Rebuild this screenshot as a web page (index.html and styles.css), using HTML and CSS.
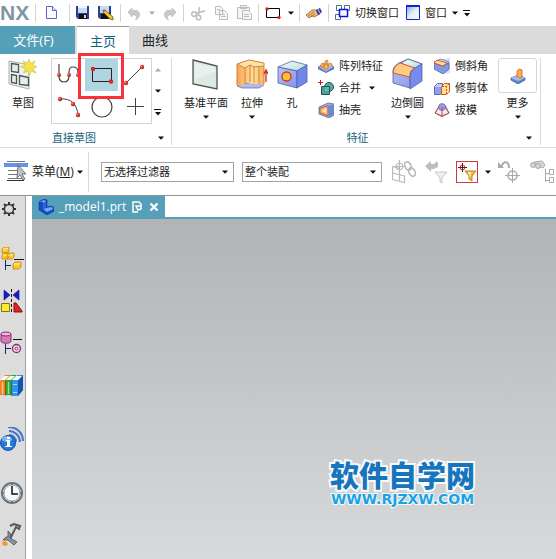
FILE: index.html
```html
<!DOCTYPE html>
<html lang="zh-CN">
<head>
<meta charset="utf-8">
<title>NX</title>
<link rel="stylesheet" href="styles.css">
</head>
<body>
<svg class="defs" aria-hidden="true">
  <defs>
    <symbol id="arrow" viewBox="0 0 8 4"><path d="M1 0.5h6L4 3.8z"/></symbol>
    <symbol id="overflow" viewBox="0 0 8 7"><path d="M0 0h7v1H0zM1 3h6L4 6.500z"/></symbol>
    <linearGradient id="blueFace" x1="0" y1="0" x2="1" y2="1"><stop offset="0" stop-color="#b9c5f6"/><stop offset="1" stop-color="#8292ea"/></linearGradient>
    <linearGradient id="paleFace" x1="0" y1="0" x2="1" y2="1"><stop offset="0" stop-color="#f4fbfb"/><stop offset="1" stop-color="#b9dae6"/></linearGradient>
    <linearGradient id="skyFace" x1="0" y1="0" x2="1" y2="1"><stop offset="0" stop-color="#7fb3d8"/><stop offset=".5" stop-color="#e4f1f8"/><stop offset="1" stop-color="#fff"/></linearGradient>
    <linearGradient id="orangeFace" x1="0" y1="0" x2="1" y2="0"><stop offset="0" stop-color="#f5a552"/><stop offset=".6" stop-color="#fde0a0"/><stop offset="1" stop-color="#f6b45c"/></linearGradient>
    <radialGradient id="redBall" cx=".35" cy=".35" r=".7"><stop offset="0" stop-color="#ff8a80"/><stop offset=".5" stop-color="#d93a30"/><stop offset="1" stop-color="#9c1c18"/></radialGradient>
  </defs>
</svg>

<header class="titlebar">
  <span class="brand">NX</span>
  <div class="tools"><button class="icon-btn doc" aria-label="新建"><svg class="i16" viewBox="0 0 16 16"><path d="M2.500 1.500h6l4 4v8h-10z" fill="#fafaff" stroke="#5a63d0"/><path d="M8.500 1.500v4h4" fill="#dfe2ff" stroke="#5a63d0"/></svg></button></div>
  <div class="tools save">
    <button class="icon-btn" aria-label="保存"><svg class="i16" viewBox="0 0 16 16"><path d="M1 1h13v13H3l-2-2z" fill="#2b3f93"/><path d="M3 1h9v7H3z" fill="#c4dcf3"/><path d="M3 1h9v2H3z" fill="#eff7ff"/><path d="M4 9h8v5H4z" fill="#111"/><path d="M9 10h2v3H9z" fill="#ddd"/></svg></button>
    <button class="icon-btn" aria-label="另存为"><svg class="i16" viewBox="0 0 16 16"><path d="M0 1h13v13H2l-2-2z" fill="#2b3f93"/><path d="M2 1h9v7H2z" fill="#c4dcf3"/><path d="M3 9h7v5H3z" fill="#111"/><path d="M5 5l2 0 8 7v3l-3-1-7-7z" fill="#f5c322" stroke="#5b4710" stroke-width=".7"/><path d="M5 5l3 0-2 2z" fill="#e43"/></svg></button>
  </div>
  <div class="tools undo">
    <button class="icon-btn" aria-label="撤销"><svg class="i16" viewBox="0 0 16 16"><path d="M2 7l4-4v2.500c5-1 8 1 7.500 4.500-.3 2-1.500 4-4 5 1.500-2.500 2-5.500-3.500-5v2z" fill="#c9c9c9" stroke="#b5b5b5" stroke-width=".6"/></svg></button>
    <svg class="arrow muted"><use href="#arrow"/></svg>
    <button class="icon-btn" aria-label="重做"><svg class="i16" viewBox="0 0 16 16"><path d="M14 7l-4-4v2.500c-5-1-8 1-7.500 4.500.3 2 1.500 4 4 5-1.500-2.500-2-5.500 3.500-5v2z" fill="#c9c9c9" stroke="#b5b5b5" stroke-width=".6"/></svg></button>
  </div>
  <div class="tools clip">
    <button class="icon-btn" aria-label="剪切"><svg class="i16" viewBox="0 0 16 16" fill="none" stroke="#bdbdbd" stroke-width="1.500"><circle cx="4" cy="9" r="2.300"/><circle cx="8.500" cy="12.500" r="2.300"/><path d="M6 8l9-2M8.500 10l1-8"/></svg></button>
    <button class="icon-btn" aria-label="复制"><svg class="i16" viewBox="0 0 16 16" fill="#f6f6f6" stroke="#bdbdbd"><path d="M2.500 1.500h5l2 2v6h-7zM6.500 5.500h5l3 3v6h-8z"/><path d="M8 9.500h4M8 11.500h5M4 4.500h3"/></svg></button>
    <button class="icon-btn" aria-label="粘贴"><svg class="i16" viewBox="0 0 16 16" fill="#f4f4f4" stroke="#bdbdbd"><path d="M1.500 2.500h12v11h-12zM4.500.5h6v3h-6z"/><path d="M6.500 5.500h6l3 3v6h-9z"/><path d="M8 9.500h5M8 11.500h5"/></svg></button>
  </div>
  <div class="tools shape">
    <button class="icon-btn" aria-label="矩形"><svg class="i16" viewBox="0 0 16 16"><path d="M1.500 3.500h13v9h-13z" fill="none" stroke="#000"/><circle cx="2" cy="4" r="1.700" fill="#e02020"/><circle cx="14" cy="12.500" r="1.700" fill="#e02020"/></svg></button>
    <svg class="arrow"><use href="#arrow"/></svg>
  </div>
  <div class="tools brush"><button class="icon-btn" aria-label="重复命令"><svg class="i16" viewBox="0 0 16 16"><path d="M0 10l6-5 5 0 3 4-6 3-2-1-3 2z" fill="#eebb6c" stroke="#7d5a2b" stroke-width=".7"/><path d="M10 5l4-2 2 4-4 3z" fill="#2834a8"/><path d="M12 4l2 4" stroke="#c8cdf5"/><path d="M2 11l6-4M4 12l5-3" stroke="#7d5a2b" stroke-width=".6"/></svg></button></div>
  <div class="tools windows">
    <button class="text-btn"><svg class="i16" viewBox="0 0 16 16" fill="#fff" stroke="#527083"><path d="M1.500.5h5v5h-5zM9.500.5h5v5h-5zM.5 9.500h5v5h-5z"/><path d="M4.500 4.500h8v7h-8z" stroke="#0a10e8" stroke-width="1.500"/></svg>切换窗口</button>
    <button class="text-btn"><svg class="i16" viewBox="0 0 16 16"><path d="M1.500 1.500h13v13h-13z" fill="url(#skyFace)" stroke="#1220e6"/><path d="M1 0h14v2H1z" fill="#1220e6"/></svg>窗口<svg class="arrow"><use href="#arrow"/></svg></button>
    <button class="icon-btn" aria-label="更多命令"><svg class="overflow"><use href="#overflow"/></svg></button>
  </div>
</header>

<nav class="tabs">
  <button class="tab file">文件(F)</button>
  <button class="tab active">主页</button>
  <button class="tab">曲线</button>
</nav>

<section class="ribbon">
  <div class="group sketch">
    <div class="row">
      <button class="big"><svg class="i32" viewBox="0 0 32 32"><path d="M2 3l11 2 9 2v24L2 26z" fill="#edf2f0" stroke="#a9b0ae"/><path d="M4.500 5.500l7 1v8l-7-1zM4.500 16.500l5 1v8l-5-1zM12.500 17.500l9 2v8l-9-1z" fill="#e5edeb" stroke="#4d5553" stroke-width="1.300"/><path d="M22 1l1.500 4.500L28 3l-2 4 4 2-4 1.500 3 4.500-5-2-1.500 5-1.500-5-4.500 2 2-4.500-5-1.500 4.500-2-2-4 4.500 2z" fill="#f4e44c" stroke="#c9bc43" stroke-width=".6"/></svg><span>草图</span></button>
      <div class="gallery">
        <div class="cells">
          <button class="cell" aria-label="轮廓"><svg class="i24" viewBox="0 0 24 24" fill="none"><path d="M2 1v12c0 5 3 6 5 6s5-1 5-6V9c0-4 2-5 4-5s5 1 5 5v4" stroke="#444" stroke-width="1.200"/><g fill="url(#redBall)"><circle cx="2" cy="12" r="2"/><circle cx="12" cy="12" r="2"/><circle cx="21" cy="12" r="2"/></g></svg></button>
          <button class="cell selected" aria-label="矩形"><svg class="i24" viewBox="0 0 24 24"><path d="M2.500 5.500h19v13h-19z" fill="none" stroke="#222"/><circle cx="3" cy="6" r="2.200" fill="#e02222"/><circle cx="21" cy="18.500" r="2.200" fill="#e02222"/></svg></button>
          <button class="cell" aria-label="直线"><svg class="i24" viewBox="0 0 24 24"><path d="M3 20L19 4" stroke="#444"/><circle cx="3" cy="20" r="2.200" fill="url(#redBall)"/><circle cx="19" cy="4" r="2.200" fill="url(#redBall)"/></svg></button>
          <button class="cell" aria-label="圆弧"><svg class="i24" viewBox="0 0 24 24"><path d="M3 4c11-1 17 5 18 16" fill="none" stroke="#444"/><g fill="url(#redBall)"><circle cx="3" cy="4" r="2.200"/><circle cx="16" cy="9" r="2.200"/><circle cx="21" cy="20" r="2.200"/></g></svg></button>
          <button class="cell" aria-label="圆"><svg class="i24" viewBox="0 0 24 24"><circle cx="12" cy="12" r="10" fill="none" stroke="#444" stroke-width="1.200"/></svg></button>
          <button class="cell" aria-label="点"><svg class="i24" viewBox="0 0 24 24"><path d="M12.500 3v17M4 11.500h17" stroke="#444"/></svg></button>
        </div>
        <span class="highlight"></span>
      </div>
      <div class="scroller">
        <button class="icon-btn" aria-label="向上"><svg class="arrow muted up"><use href="#arrow"/></svg></button>
        <button class="icon-btn" aria-label="向下"><svg class="arrow"><use href="#arrow"/></svg></button>
        <button class="icon-btn" aria-label="展开"><svg class="overflow"><use href="#overflow"/></svg></button>
      </div>
    </div>
    <footer class="caption"><span>直接草图</span><svg class="arrow"><use href="#arrow"/></svg></footer>
  </div>

  <div class="group feature">
    <div class="row">
      <button class="big"><svg class="i32" viewBox="0 0 32 32"><path d="M3 2l24 6v23L3 26z" fill="#dcebdf" stroke="#4f5452" stroke-width="1.300"/><path d="M5 5l20 5v4L5 21z" fill="#e9eeee"/></svg><span>基准平面</span><svg class="arrow"><use href="#arrow"/></svg></button>
      <button class="big"><svg class="i32" viewBox="0 0 32 32"><path d="M1 28l5-3h7l4 1 8-2 3 3-5 3H6z" fill="#aebcf0" stroke="#5c65a0" stroke-width=".7"/><path d="M1 6l5 2 3 1 6-3 4 2h9v19l-5-1h-8l-5-2-3 4-6-1z" fill="url(#orangeFace)"/><path d="M1 6l12-4 15 3v3l-10 1-4-2-5 3z" fill="#fde3a8"/><path d="M1 6l12-4 15 3v21M1 6v21M1 6l8 4 5-3 4 2 10-1M9 10v16M14 7v17M18 9v16M23 9v17" fill="none" stroke="#d98032"/><path d="M30 24V13M28 16l2-4 2 4" fill="none" stroke="#c42c2c" stroke-width="1.300"/></svg><span>拉伸</span><svg class="arrow"><use href="#arrow"/></svg></button>
      <button class="big"><svg class="i32" viewBox="0 0 32 32"><path d="M2 9l14-6 15 4-10 6z" fill="url(#paleFace)" stroke="#53619b" stroke-width=".8"/><path d="M2 9l19 4v17L2 25z" fill="url(#blueFace)" stroke="#53619b" stroke-width=".8"/><path d="M21 13l10-6v17l-10 6z" fill="#7286ee" stroke="#53619b" stroke-width=".8"/><circle cx="10.500" cy="18.500" r="4.500" fill="#ffc32f" stroke="#d83223" stroke-width="1.300"/></svg><span>孔</span></button>
      <div class="stack">
        <button class="text-btn"><svg class="i16" viewBox="0 0 16 16"><path d="M0 9l8-4 8 4-8 5z" fill="#a5bdf0" stroke="#5067a8" stroke-width=".7"/><path d="M0 9v2l8 4 8-4V9l-8 5z" fill="#4d6dbe"/><path d="M3 9V6l2-1 1 1v3zM6 11V7l2-1 2 1v4zM7 5V3l2-1 1 1v4l2-2 2 1v3" fill="#ffb453" stroke="#c97024" stroke-width=".7"/></svg>阵列特征</button>
        <button class="text-btn"><svg class="i16" viewBox="0 0 16 16"><circle cx="11" cy="7" r="4.500" fill="#52aaa0" stroke="#244d57"/><path d="M3.500 6.500h8v8h-8z" fill="#45a49a" stroke="#244d57"/><path d="M7 7h4v4H7z" fill="#68bab0"/><path d="M0 2.500h5M2.500 0v5" stroke="#d01616"/></svg>合并<svg class="arrow wide"><use href="#arrow"/></svg></button>
        <button class="text-btn"><svg class="i16" viewBox="0 0 16 16"><path d="M1 5l9-4 6 1v11l-5 3-10-4z" fill="#98aeea" stroke="#4c5d9c" stroke-width=".7"/><path d="M2 6l8-2v10l-2-1-6-2z" fill="#f8b471" stroke="#cb4528" stroke-width=".8"/><path d="M10 4l6-2v11l-5 3z" fill="#6e88d0"/><path d="M4 9l4-3v5z" fill="#fff0d8"/></svg>抽壳</button>
      </div>
      <button class="big"><svg class="i32" viewBox="0 0 32 32"><path d="M1 12C2 8 4 7 7 5l9-4 14 5-8 5c-4 2-4 6-4 19L1 25z" fill="url(#blueFace)" stroke="#53619b" stroke-width=".8"/><path d="M9 5l7-4 14 5-8 5z" fill="url(#paleFace)" stroke="#53619b" stroke-width=".8"/><path d="M1 15C2 9 4 7 8 5l15 5c-4 2-5 4-5 9z" fill="#fdcc80" stroke="#df542d"/><path d="M18 19c0-6 2-8 12-13v17l-12 8z" fill="#768bed" stroke="#53619b" stroke-width=".8"/></svg><span>边倒圆</span><svg class="arrow"><use href="#arrow"/></svg></button>
      <div class="stack">
        <button class="text-btn"><svg class="i16" viewBox="0 0 16 16"><path d="M8 1l8-1v15l-8 1z" fill="#d4dfff"/><path d="M0 5l9 3 6-3v6l-6 5-9-5z" fill="#8099e0" stroke="#435999" stroke-width=".7"/><path d="M0 4l7-3 8 3-6 4z" fill="#bfe1ec" stroke="#536aad" stroke-width=".7"/><path d="M3 2l10 3-4 3-9-3z" fill="#ffd9a0" stroke="#d64b24" stroke-width=".9"/></svg>倒斜角</button>
        <button class="text-btn"><svg class="i16" viewBox="0 0 16 16"><path d="M.5 6.500l3-3h5v9l-2 2h-6z" fill="#c3cdf9" stroke="#596bb0"/><path d="M1 7h6v7H1z" fill="#8ea0f0"/><path d="M7.500 6.500l3-3h5v8l-3 3h-5z" fill="#ffe095" stroke="#d25923"/><path d="M12.500 14V6.500l3-3M8 6.500h4" fill="none" stroke="#d25923" stroke-dasharray="2 1"/></svg>修剪体</button>
        <button class="text-btn"><svg class="i16" viewBox="0 0 16 16"><path d="M5 4l3-2 4 2 3 7-7 4-7-4z" fill="#e9effa" stroke="#667cae" stroke-width=".7"/><circle cx="8" cy="5" r="3.500" fill="#8ba0e8" stroke="#5365ac" stroke-width=".6"/><path d="M5 5L1 11l7 3 7-3-4-6M8 5v9" fill="none" stroke="#d53b2a"/></svg>拔模</button>
      </div>
      <button class="big more"><span class="tile"><svg class="i16" viewBox="0 0 16 16"><path d="M1 10l7-3 7 3v2l-7 4-7-4z" fill="#6186cf" stroke="#34538b" stroke-width=".7"/><path d="M1 10l7-3 7 3-7 3z" fill="#a4bfe8"/><path d="M7 3l2-2 3 1v7l-2 1-3-1z" fill="#ffaa4c" stroke="#c5681f" stroke-width=".8"/></svg></span><span>更多</span><svg class="arrow"><use href="#arrow"/></svg></button>
    </div>
    <footer class="caption"><span>特征</span><svg class="arrow"><use href="#arrow"/></svg></footer>
  </div>
</section>

<section class="selection-bar">
  <button class="menu-btn"><svg class="i24" viewBox="0 0 24 24"><path d="M3 1.500h18M4 10.500h14M4 14.500h14M4 18.500h14" stroke="#777"/><path d="M3 20.500h17" stroke="#333"/><path d="M0 3h24v4H0z" fill="#6b8fe4"/><path d="M14 5l8 9h-4l3 5-2 1-3-5-3 3z" fill="#bfc3c5" stroke="#5a5e61" stroke-width=".8"/></svg><span>菜单(<u>M</u>)</span><svg class="arrow"><use href="#arrow"/></svg></button>
  <label class="picker filter"><select aria-label="选择过滤器"><option>无选择过滤器</option></select><svg class="arrow"><use href="#arrow"/></svg></label>
  <label class="picker scope"><select aria-label="选择范围"><option>整个装配</option></select><svg class="arrow"><use href="#arrow"/></svg></label>
  <div class="filters">
    <button class="icon-btn" aria-label="关联选择"><svg class="i24" viewBox="0 0 24 24" fill="none" stroke="#b8b8b8"><path d="M.5 6.500l7 2M.5 6.500v13l12 3v-7M.5 13l12 3M7.500 0v21M2 6.500h11" stroke-width="1.200"/><circle cx="7.500" cy="6.500" r="3.500"/><g stroke-width="1.600"><ellipse cx="16" cy="6" rx="3" ry="4.500" transform="rotate(-25 16 6)"/><ellipse cx="20" cy="12" rx="3" ry="4.500" transform="rotate(-25 20 12)"/></g></svg></button>
    <button class="icon-btn" aria-label="重置过滤器"><svg class="i24" viewBox="0 0 24 24"><path d="M1 6l6-5v3h3l3-3c3 6 0 8-6 8v3z" fill="#bdbdbd"/><path d="M11 12h12l-5 6v5l-2-1v-4z" fill="#eee" stroke="#c9c9c9"/></svg></button>
    <button class="filter-active" aria-label="选择过滤"><svg class="i20" viewBox="0 0 20 20"><path d="M5.500 1v9M1 5.500h9" stroke="#441818"/><circle cx="5.500" cy="5.500" r="2.500" fill="none" stroke="#cc3038"/><path d="M8 9h11l-4 5v5l-3-2v-3z" fill="#f4b73e" stroke="#b98728"/><path d="M11 10h3l-1 6z" fill="#fff0a5"/></svg></button>
    <svg class="arrow"><use href="#arrow"/></svg>
    <button class="icon-btn" aria-label="还原"><svg class="i24" viewBox="0 0 24 24" fill="none" stroke="#ababab"><path d="M3 7C6 0 11 1 11 8" stroke-width="2"/><path d="M0 2v6h6z" fill="#aaa" stroke="none"/><circle cx="14.500" cy="15.500" r="4.500" stroke-width="1.500"/><path d="M14.500 8v15M7 15.500h15"/></svg></button>
    <button class="icon-btn" aria-label="查找"><svg class="i24" viewBox="0 0 24 24" fill="#d5d5d5" stroke="#aaa"><path d="M4 2l8-1 3 4-2 3-3-1-1-2-3 1z"/><circle cx="3" cy="5" r="2.500"/><circle cx="8" cy="6" r="2.500"/><path d="M15.500 9v13M16 13.500h3M16 20.500h3M19.500 9.500h4v5h-4zM19.500 17.500h4v5h-4z" fill="none"/></svg></button>
  </div>
</section>

<main class="workspace">
  <aside class="sidebar">
    <div class="side-group first"><button class="icon-btn" aria-label="设置"><svg class="i24" viewBox="0 0 24 24" fill="none" stroke="#333"><circle cx="9" cy="12" r="4.600" stroke-width="1.500"/><path d="M9 5v2M9 17v2M2 12h2M14 12h2M4 7l2 2M14 7l-2 2M4 17l2-2M14 17l-2-2" stroke-width="2"/></svg></button></div>
    <div class="side-group">
      <button class="icon-btn" aria-label="装配导航器"><svg class="i24" viewBox="0 0 24 24"><g fill="#ffc727" stroke="#b98000" stroke-width=".7"><path d="M2 2l2-2h5v4L7 6H2zM2 8l2-2h5v4l-2 2H2zM7 8l2-2h5v4l-2 2H7zM13 17l2-2h6v5l-2 2h-6z"/></g><path d="M3 2h4l1-1M3 8h4M8 8h4l1-1M14 17h5l1-1" fill="none" stroke="#fff1a0"/><path d="M14 12.500h10" stroke="#111"/><path d="M5.500 13v10M5 18.500h6" stroke="#182575"/></svg></button>
      <button class="icon-btn" aria-label="约束导航器"><svg class="i24" viewBox="0 0 24 24"><path d="M4 1l6 5-6 5zM19 1l-6 5 6 5z" fill="#1718d9" stroke="#111170" stroke-width=".6"/><path d="M11.500 0v24" stroke="#111" stroke-dasharray="3 2"/><path d="M1.500 14.500h8v8h-8z" fill="#ffed2b" stroke="#8c7200"/><path d="M14 14h2l6 8v1h-8z" fill="#e52020" stroke="#821010"/></svg></button>
      <button class="icon-btn" aria-label="部件导航器"><svg class="i24" viewBox="0 0 24 24"><path d="M1 3v7c0 3 10 3 10 0V3" fill="#d47bb6" stroke="#8a2770"/><ellipse cx="6" cy="3" rx="5" ry="2" fill="#f5b6df" stroke="#8a2770"/><path d="M13 8.500h9" stroke="#111"/><path d="M5.500 13v10M5 17.500h6" stroke="#182575"/><circle cx="16.500" cy="17.500" r="4" fill="#f5e4ef" stroke="#8a2770" stroke-width="1.300"/><circle cx="16.500" cy="17.500" r="1.500" fill="none" stroke="#8a2770"/></svg></button>
      <button class="icon-btn" aria-label="重用库"><svg class="i24" viewBox="0 0 24 24"><path d="M0 8l5-6h5v4L6 22H0z" fill="#ed8217"/><path d="M6 8l5-6h5v4l-4 16H6z" fill="#20a932"/><path d="M12 8l5-6h6v15l-5 6h-6z" fill="#2d95ee"/><path d="M18 8l5-6v15l-5 6z" fill="#1454ae"/><path d="M0 7l4-4h5L5 7zM6 7l4-4h5l-4 4zM12 7l4-4h6l-4 4z" fill="#fff"/><path d="M2.500 9v12M8.500 9v12" stroke="#fff" stroke-width="1.500" opacity=".55"/><path d="M5.500 7v16M11.500 7v16" stroke="#5b4c30" stroke-width=".7"/><path d="M13 11.500h4M13 19.500h4" stroke="#fff" opacity=".6"/></svg></button>
    </div>
    <div class="side-group">
      <button class="icon-btn" aria-label="网页浏览器"><svg class="i24" viewBox="0 0 24 24"><g fill="none" stroke="#4676ca" stroke-width="2"><path d="M9 8c4 0 7 3 7 7M9 4c6 0 11 5 11 11M8 0c9 0 15 6 15 14"/></g><circle cx="8" cy="16" r="7.500" fill="#247bd7" stroke="#174d9e"/><ellipse cx="7" cy="12" rx="5" ry="3" fill="#7eb6ef"/><path d="M7 10h3v2H7zM6 13h4v6h2v1H5v-1h2v-5H6z" fill="#fff"/></svg></button>
    </div>
    <div class="side-group">
      <button class="icon-btn" aria-label="历史记录"><svg class="i24" viewBox="0 0 24 24"><circle cx="12" cy="12" r="10" fill="#e5edf2" stroke="#6a737c" stroke-width="2"/><circle cx="12" cy="12" r="8" fill="#f6fafc" stroke="#9da8b1"/><path d="M12 5v8h6" fill="none" stroke="#111" stroke-width="1.500"/><path d="M12 3v1M12 20v1M3 12h1M20 12h1" stroke="#222"/></svg></button>
      <button class="icon-btn" aria-label="角色"><svg class="i24" viewBox="0 0 24 24"><path d="M10 3l4-2 6 2-1 3-3-2-6 12" fill="none" stroke="#545b5e" stroke-width="2"/><path d="M8 8l3 3-1 4 7 4-3 3-6-5-5 0 3-3 2 0 0-2z" fill="#8b949d" stroke="#454b50" stroke-width=".8"/><path d="M3 18l4 1 1 3-4 1-2-2z" fill="#ff9423"/></svg></button>
    </div>
  </aside>
  <section class="document">
    <div class="doc-tabs"><div class="doc-tab">
      <svg class="i16" viewBox="0 0 16 16"><path d="M1 3l5-3 3 1v7l5-1 2 2v3l-7 4-8-5z" fill="#1748c8" stroke="#173583" stroke-width=".6"/><path d="M2 3l4-2 2 1v7l6-1 1 2-6 3-4-3V3z" fill="#72a8ff"/><path d="M5 4l3-2v7l-3 2z" fill="#2c63df"/></svg>
      <span>_model1.prt</span>
      <svg class="i12" viewBox="0 0 12 12" fill="none" stroke="#fff" stroke-width="1.500"><path d="M7 11H2V1h6l2 2v2"/><path d="M5 5h5v3L7 9z"/></svg>
      <button class="icon-btn" aria-label="关闭"><svg class="i12" viewBox="0 0 12 12"><path d="M2.500 2.500l7 7M9.500 2.500l-7 7" stroke="#fff" stroke-width="2.400"/></svg></button>
    </div></div>
    <div class="canvas"><div class="watermark"><strong>软件自学网</strong><span>WWW.RJZXW.COM</span></div></div>
  </section>
</main>
</body>
</html>
```
FILE: styles.css
```css
* { box-sizing: border-box; }
body {
  margin: 0;
  height: 100vh;
  display: flex;
  flex-direction: column;
  overflow: hidden;
  background: #fff;
  color: #1c1c1c;
  font: 11px/16px "Open Sans", "Noto Sans CJK SC", sans-serif;
}
button { border: 0; padding: 0; margin: 0; background: none; color: inherit; font: inherit; }
svg { display: block; flex: none; }
.defs { position: absolute; width: 0; height: 0; }
.i12 { width: 12px; height: 12px; }
.i16 { width: 16px; height: 16px; }
.i20 { width: 20px; height: 20px; }
.i24 { width: 24px; height: 24px; }
.i32 { width: 32px; height: 32px; }
.arrow { width: 8px; height: 4px; fill: #111; }
.overflow { width: 8px; height: 7px; fill: #111; }
.muted { fill: #a8a8a8; }
.up { transform: rotate(180deg); }
.icon-btn { display: flex; align-items: center; justify-content: center; flex: none; }
.text-btn { display: flex; align-items: center; gap: 4px; white-space: nowrap; }

.titlebar { display: flex; align-items: center; height: 26px; flex: none; }
.brand { width: 35px; color: #7f96a4; font: bold 21px/26px "Liberation Sans", sans-serif; }
.tools { display: flex; align-items: center; gap: 6px; height: 18px; border-left: 1px solid #d4d4d4; padding: 0 6px; flex: none; }
.doc { padding: 0 3px 0 2px; }
.save { gap: 7px; padding: 0 6px 0 5px; }
.undo { padding: 0 5px; }
.clip { gap: 7px; }
.shape { padding-right: 4px; }
.windows .overflow { margin-left: -2px; }

.tabs { display: flex; height: 28px; flex: none; background: #dbdbdb; }
.tab { width: 52px; font-size: 13px; line-height: 28px; color: #222; }
.tab.file { width: 75px; padding-right: 8px; margin-right: 2px; background: #559fb8; color: #fff; }
.tab.active { background: #fff; border-top: 1px solid #999; line-height: 26px; color: #11627c; }

.ribbon { display: flex; height: 94px; flex: none; padding: 4px 0 2px; border-bottom: 1px solid #d9d9d9; }
.group { display: flex; flex-direction: column; justify-content: space-between; border-right: 1px solid #d9d9d9; }
.row { display: flex; align-items: flex-start; }
.big { display: flex; flex-direction: column; align-items: center; white-space: nowrap; min-width: 32px; }
.big span { margin-top: 5px; }
.big > .arrow { margin-top: 4px; }
.caption { display: flex; align-items: center; justify-content: center; color: #17637e; line-height: 14px; }
.sketch { width: 172px; padding-left: 7px; }
.gallery { position: relative; margin-left: 12px; border: 1px solid #d3d3d3; }
.cells { display: grid; grid-template-columns: repeat(3, 33px); grid-auto-rows: 32px; }
.cell { display: flex; align-items: center; justify-content: center; }
.cell.selected { background: #afd6e0; }
.highlight { position: absolute; left: 26px; top: -6px; width: 46px; height: 46px; border: 3px solid #f8323c; pointer-events: none; }
.scroller { display: flex; flex-direction: column; justify-content: space-between; height: 64px; padding: 10px 0 6px 2px; }
.sketch .caption { padding: 0 6px 0 45px; justify-content: space-between; }
.feature { width: 369px; padding-left: 12px; }
.feature .row { gap: 8px; }
.stack { display: flex; flex-direction: column; padding-left: 2px; margin-top: -3px; }
.stack .text-btn { height: 22px; gap: 5px; }
.stack .wide { margin-left: 2px; }
.big .tile { display: flex; align-items: center; justify-content: center; width: 39px; height: 35px; margin: 0 0 -3px; border: 1px solid #d6d6d6; border-radius: 3px; }
.more { margin-left: 2px; }
.feature .caption { position: relative; padding-right: 9px; }
.feature .caption .arrow { position: absolute; right: 7px; }

.selection-bar { display: flex; align-items: center; height: 48px; flex: none; border-bottom: 1px solid #8b9297; overflow: hidden; }
.menu-btn { display: flex; align-items: center; gap: 4px; height: 40px; width: 89px; padding-left: 4px; border-right: 1px solid #d9d9d9; flex: none; white-space: nowrap; }
.menu-btn .arrow { margin-left: -2px; }
.menu-btn span { font-size: 12px; }
.picker { position: relative; display: flex; align-items: center; margin-left: 12px; flex: none; }
.picker select { appearance: none; width: 100%; height: 20px; border: 1px solid #a3a3a3; border-radius: 0; padding: 0 2px; background: #fff; color: #1c1c1c; font: inherit; }
.picker .arrow { position: absolute; right: 5px; pointer-events: none; }
.filter { width: 133px; }
.scope { width: 140px; margin-left: 8px; }
.filters { display: flex; align-items: center; gap: 8px; padding-left: 10px; }
.filters > .arrow { margin: 0 -2px; }
.filter-active { border: 1px solid #ce3943; }

.workspace { display: flex; flex: 1; min-height: 0; }
.sidebar { display: flex; flex-direction: column; gap: 12px; width: 26px; flex: none; background: #dcdcdc; border-right: 1px solid #a2a2a2; }
.side-group .icon-btn { height: 42px; }
.first { padding-bottom: 4px; }
.side-group.first .icon-btn { height: 26px; }
.document { display: flex; flex-direction: column; flex: 1; min-width: 0; margin-left: 6px; }
.doc-tabs { display: flex; flex: none; border-bottom: 2px solid #559fb8; }
.doc-tab { display: flex; align-items: center; gap: 5px; height: 21px; padding: 0 5px 0 6px; background: #559fb8; color: #fff; font-size: 12px; }
.canvas { position: relative; flex: 1; background: linear-gradient(#b2b3b5, #d8d9da); }
.watermark { position: absolute; right: 81px; bottom: 53px; display: flex; flex-direction: column; align-items: center; color: #1675bd; -webkit-text-stroke: 4px #f7fafc; paint-order: stroke fill; }
.watermark strong { font: 900 29px/36px "Noto Sans CJK SC", sans-serif; }
.watermark span { color: #19a2e4; font: bold 14px/14px "DejaVu Sans", sans-serif; -webkit-text-stroke: 2px #f7fafc; }
```
